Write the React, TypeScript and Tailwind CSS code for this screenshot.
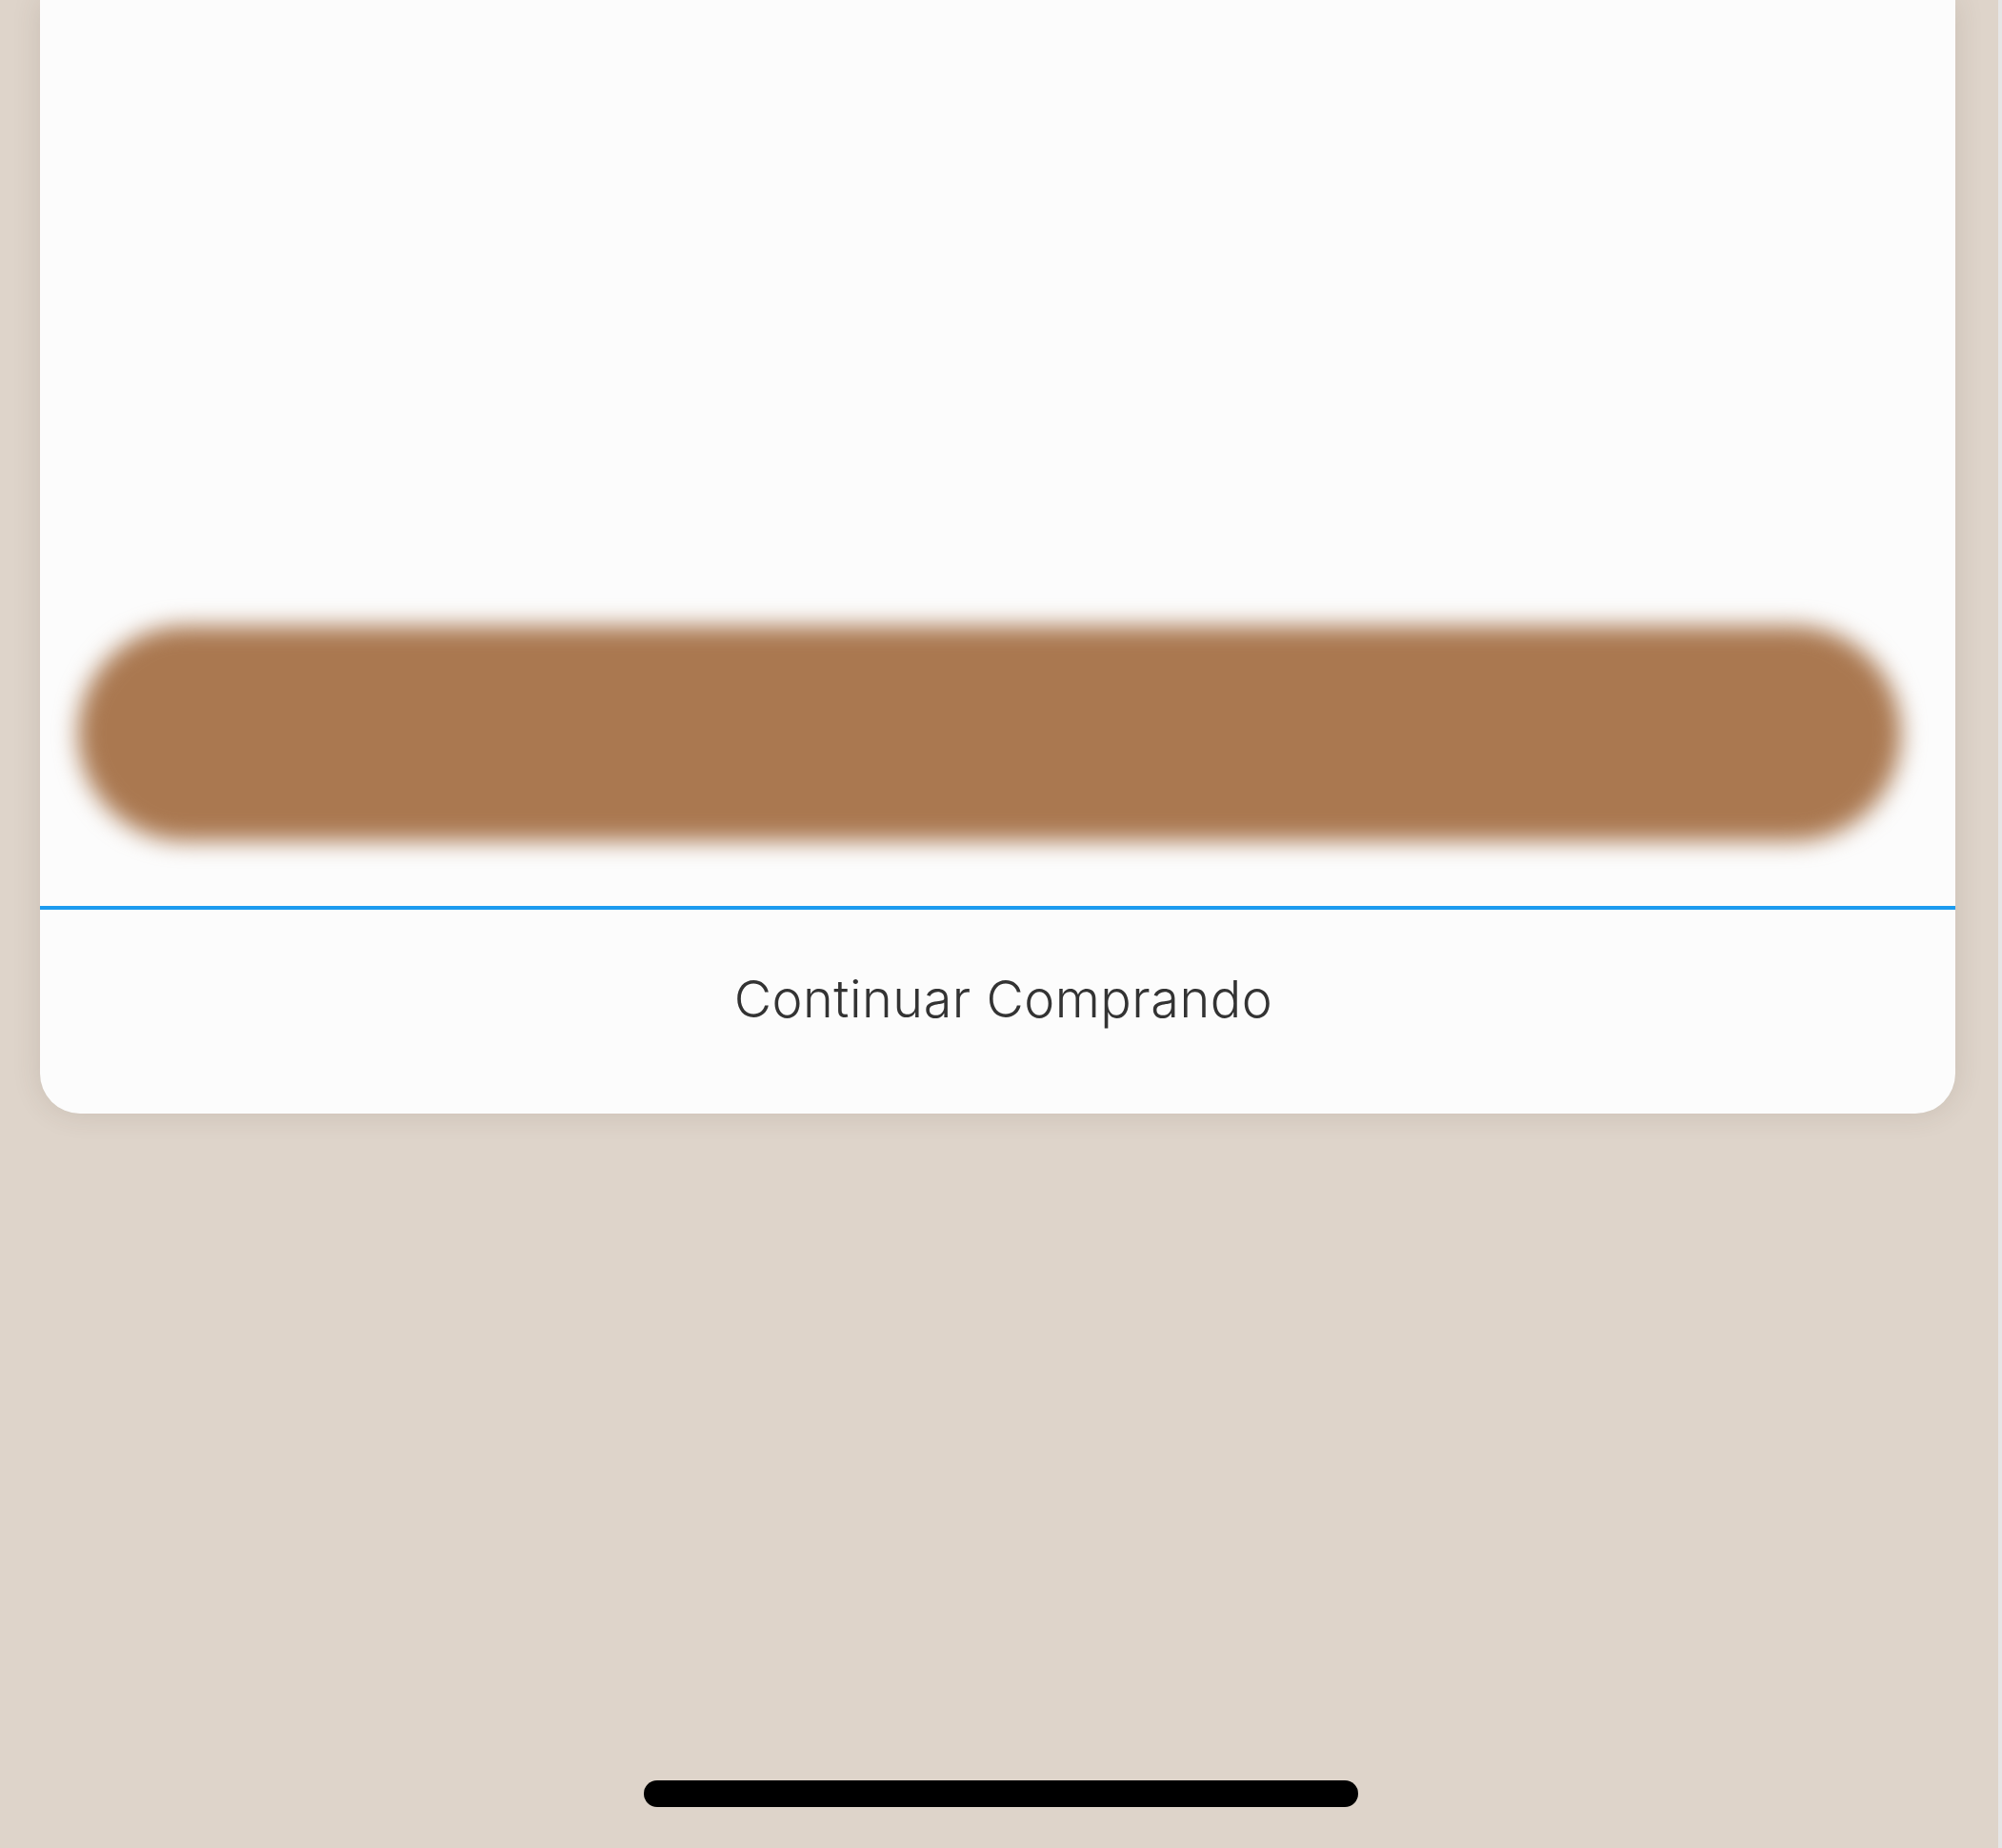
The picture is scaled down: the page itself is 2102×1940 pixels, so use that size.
import React from "react";

export default function App() {
  return (
    <div className="flex h-[1940px] w-full overflow-hidden bg-[#DED4CA]" style={{ fontFamily: "Inter, 'Liberation Sans', sans-serif" }}>
      <div className="flex flex-1 flex-col">
        <div className="ml-[42px] flex h-[1169px] w-[2011px] flex-col rounded-b-[42px] bg-[#FCFCFC] shadow-[0_0_30px_rgba(80,60,40,0.14)]">
          <div className="h-[657px]" />
          <div className="pl-[40px] pr-[57px]">
            <div className="h-[226px] rounded-full bg-[#AA7850] blur-[12px]" />
          </div>
          <div className="h-[68px]" />
          <div className="h-[4px] bg-[#1C9BEF]" />
          <div className="flex flex-1 justify-center pl-[12px] pt-[67px]">
            <span className="text-[54px] font-light leading-none tracking-[0.5px] text-[#333333]">Continuar Comprando</span>
          </div>
        </div>
        <div className="flex flex-1 items-start justify-center pl-[3px] pt-[700px]">
          <div className="h-[28px] w-[750px] rounded-full bg-black" />
        </div>
      </div>
      <div className="w-[4px] bg-[#E6E6E6]" />
    </div>
  );
}
